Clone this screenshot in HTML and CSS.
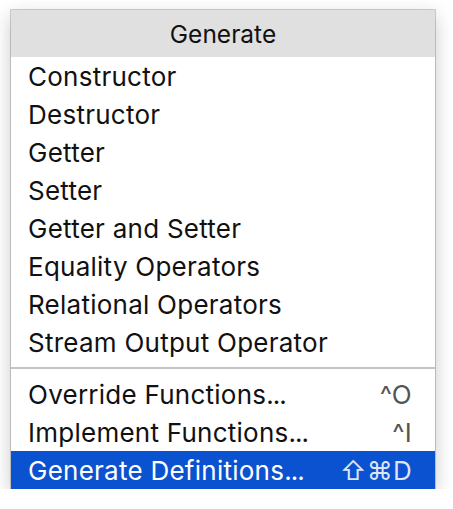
FILE: index.html
```html
<!DOCTYPE html>
<html>
<head>
<meta charset="utf-8">
<link rel="stylesheet" href="styles.css">
</head>
<body>
<div class="menu">
  <div class="header">Generate</div>
  <div class="item">Constructor</div>
  <div class="item">Destructor</div>
  <div class="item">Getter</div>
  <div class="item">Setter</div>
  <div class="item">Getter and Setter</div>
  <div class="item">Equality Operators</div>
  <div class="item">Relational Operators</div>
  <div class="item">Stream Output Operator</div>
  <div class="sep"></div>
  <div class="item"><span>Override Functions<span class="dots">...</span></span><span class="key">^O</span></div>
  <div class="item"><span>Implement Functions<span class="dots">...</span></span><span class="key">^I</span></div>
  <div class="item selected"><span>Generate Definitions<span class="dots">...</span></span><span class="key">⇧⌘D</span></div>
</div>
</body>
</html>
```
FILE: styles.css
```css
html, body {
  margin: 0;
  padding: 0;
  background: #ffffff;
}
body {
  font-family: Inter, "Liberation Sans", "DejaVu Sans", sans-serif;
  font-size: 26px;
  letter-spacing: 0.25px;
  color: #111;
}
.menu {
  margin: 10px 0 0 11px;
  width: 424px;
  background: #fff;
  box-shadow: 0 0 0 1px rgba(0,0,0,0.18), 0 6px 18px rgba(0,0,0,0.22);
}
.header {
  height: 47px;
  background: #e0e0e0;
  display: flex;
  align-items: center;
  justify-content: center;
  font-size: 24.5px;
  letter-spacing: 0;
}
.item {
  height: 38px;
  display: flex;
  align-items: center;
  justify-content: space-between;
  padding: 0 23px 0 17px;
}
.dots {
  letter-spacing: -1px;
}
.sep {
  height: 14px;
  display: flex;
  align-items: center;
}
.sep::before {
  content: "";
  display: block;
  width: 100%;
  height: 2px;
  background: #c4c4c4;
}
.key {
  color: #555;
}
.selected {
  background: #0a52d0;
  color: #fff;
}
.selected .key {
  color: #dde4f4;
}
```
